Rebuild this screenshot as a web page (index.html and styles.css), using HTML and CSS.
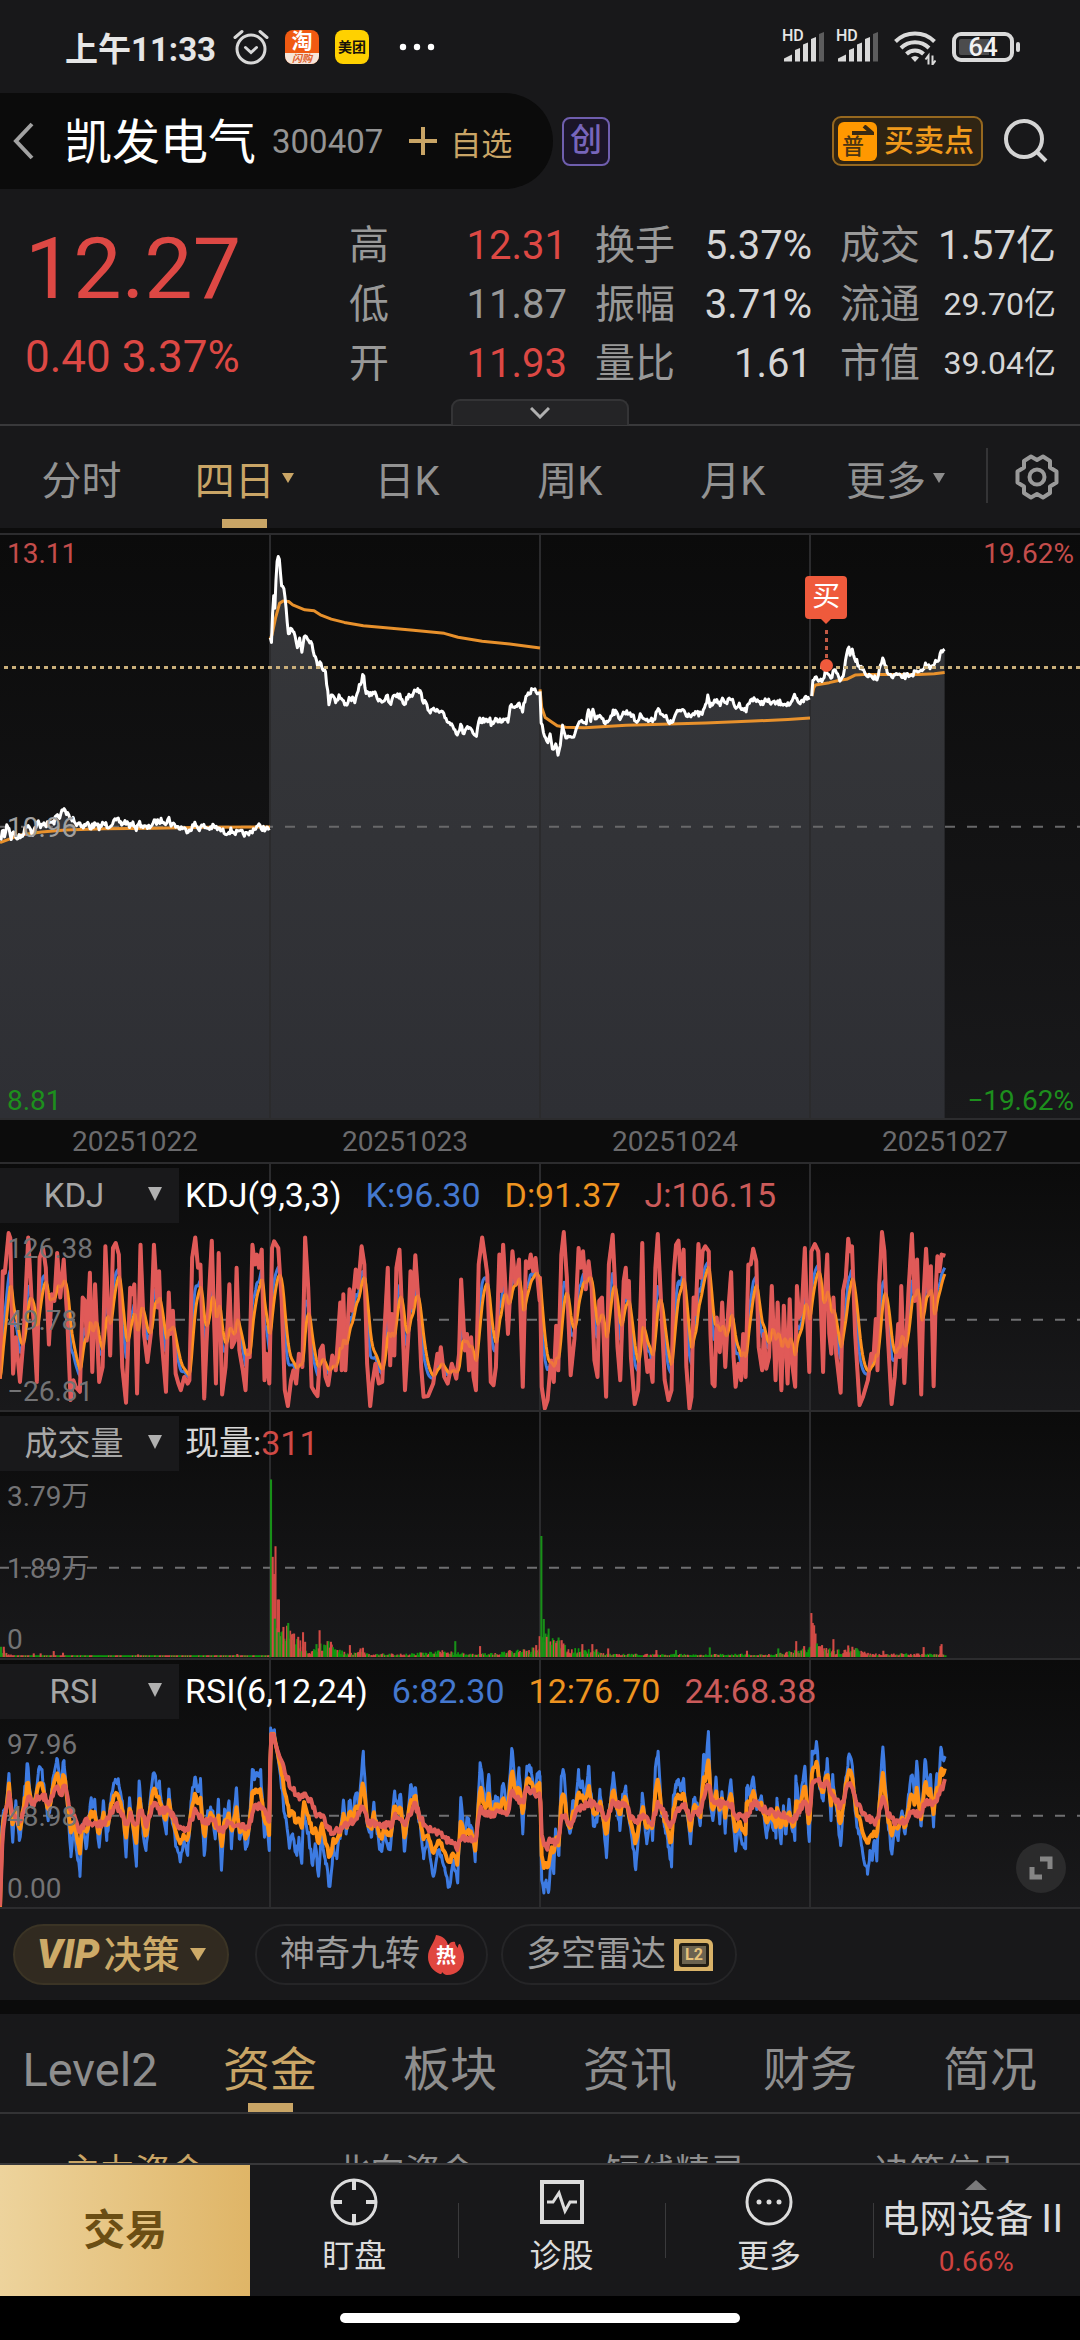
FILE: index.html
```
<!DOCTYPE html>
<html lang="zh-CN">
<head>
<meta charset="utf-8">
<meta name="viewport" content="width=device-width, initial-scale=1">
<title>凯发电气 300407</title>
<link rel="stylesheet" href="styles.css">
</head>
<body>
<div class="status">
  <span class="clock">上午11:33</span>
  <svg class="alarm" viewBox="0 0 36 36" width="36" height="36" fill="none" stroke="#d8d8d8" stroke-width="3" stroke-linecap="round"><circle cx="18" cy="20" r="14"/><path d="M12.500 18.500l5.500 5 5.500-5M2 8.500 9 2.500M34 8.500 27 2.500"/></svg>
  <span class="app app-tao"><b>淘</b><i>闪购</i></span>
  <span class="app app-mei">美团</span>
  <svg class="dots" viewBox="0 0 36 8" width="36" height="8" fill="#fff"><circle cx="4" cy="4" r="3.200"/><circle cx="18" cy="4" r="3.200"/><circle cx="32" cy="4" r="3.200"/></svg>
  <span class="status-right">
    <span class="signal"><em>HD</em><svg viewBox="0 0 41 31" width="41" height="31" fill="#dadada"><path d="M1 30.500v-3l8-4v7zM12 19l5-2v13.500h-5zM20 13.500l5-2v19h-5zM28 8l5-2v24.500h-5z"/><path fill="#5c5c5d" d="M36 3l5-2v29.500h-5z"/></svg></span>
    <span class="signal"><em>HD</em><svg viewBox="0 0 41 31" width="41" height="31" fill="#dadada"><path d="M1 30.500v-3l8-4v7zM12 19l5-2v13.500h-5zM20 13.500l5-2v19h-5zM28 8l5-2v24.500h-5z"/><path fill="#5c5c5d" d="M36 3l5-2v29.500h-5z"/></svg></span>
    <svg class="wifi" viewBox="0 0 42 34" width="42" height="34" fill="none" stroke="#dadada" stroke-width="4"><path d="M1.500 10.500a28 28 0 0 1 39 0M7 17a20 20 0 0 1 28 0M12.500 23a12 12 0 0 1 17 0"/><path d="M21 31l-4-4.500a6 6 0 0 1 8 0z" fill="#dadada" stroke="none"/><path d="M34.500 33.500v-9l-3 4M38.500 24.500v9l3-4" stroke-width="2"/></svg>
    <span class="battery"><span>64</span></span>
  </span>
</div>

<header class="head">
  <div class="pill">
    <button class="plain" aria-label="返回"><svg viewBox="0 0 24 38" width="24" height="38" fill="none" stroke="#a2a2a2" stroke-width="4"><path d="M20 2 4 19l16 17"/></svg></button>
    <h1>凯发电气</h1>
    <span class="code">300407</span>
    <button class="plain add"><svg viewBox="0 0 28 28" width="28" height="28" stroke="#c9a566" stroke-width="4"><path d="M14 0v28M0 14h28"/></svg>自选</button>
  </div>
  <span class="board">创</span>
  <button class="points"><span class="pu">普<svg viewBox="0 0 22 10" width="22" height="10" fill="none" stroke="#3a2a12" stroke-width="4"><path d="M0 8h20L12 1"/></svg></span>买卖点</button>
  <button class="plain search" aria-label="搜索"><svg viewBox="0 0 46 46" width="46" height="46" fill="none" stroke="#d4d4d4" stroke-width="4"><circle cx="21" cy="21" r="18"/><path d="M33.500 33.500 43 43"/></svg></button>
</header>

<section class="quote">
  <div class="price"><strong>12.27</strong><span>0.40 3.37%</span></div>
  <dl class="stats">
    <div><dt>高</dt><dd class="up">12.31</dd></div>
    <div><dt>换手</dt><dd>5.37%</dd></div>
    <div><dt>成交</dt><dd>1.57亿</dd></div>
    <div><dt>低</dt><dd class="dim">11.87</dd></div>
    <div><dt>振幅</dt><dd>3.71%</dd></div>
    <div><dt>流通</dt><dd class="small">29.70亿</dd></div>
    <div><dt>开</dt><dd class="up">11.93</dd></div>
    <div><dt>量比</dt><dd>1.61</dd></div>
    <div><dt>市值</dt><dd class="small">39.04亿</dd></div>
  </dl>
</section>
<div class="fold"><button aria-label="展开"><svg viewBox="0 0 20 12" width="20" height="12" fill="none" stroke="#b0b0b0" stroke-width="3"><path d="M1 1l9 9 9-9"/></svg></button></div>

<nav class="periods">
  <button>分时</button>
  <button class="on">四日<svg viewBox="0 0 12 10" width="12" height="10" fill="#c9a566"><path d="M0 0h12L6 10z"/></svg></button>
  <button>日K</button>
  <button>周K</button>
  <button>月K</button>
  <button>更多<svg viewBox="0 0 12 10" width="12" height="10" fill="#8d8d8d"><path d="M0 0h12L6 10z"/></svg></button>
  <button class="gear" aria-label="设置"><svg viewBox="0 0 48 48" width="48" height="48" fill="none" stroke="#9a9a9a" stroke-width="4" stroke-linejoin="round"><path d="M18 3.500 24 7l6-3.500 7 4.500v6.500l6.500 4v11l-6.500 4V40l-7 4.500-6-3.500-6 3.500-7-4.500v-6.500l-6.500-4v-11l6.500-4V8z"/><circle cx="24" cy="24" r="7.500"/></svg></button>
</nav>

<main>
  <section class="plot main-plot">
    <svg id="price" class="canvas" viewBox="0 39 3136 1761" preserveAspectRatio="none"></svg>
    <div class="axis"><span class="up">13.11</span><span>10.96</span><span class="down">8.81</span></div>
    <div class="axis axis-right"><span class="up">19.62%</span><span class="down">−19.62%</span></div>
    <div class="mark"><span class="flag">买</span><span class="stem"></span><span class="dot"></span></div>
  </section>
  <div class="dates"><span>20251022</span><span>20251023</span><span>20251024</span><span>20251027</span></div>

  <section class="plot sub">
    <svg id="kdj" class="canvas" viewBox="0 -114 3136 744" preserveAspectRatio="none"></svg>
    <div class="legend"><label class="pick"><select aria-label="指标一"><option>KDJ</option></select></label><span class="white">KDJ(9,3,3)</span><span class="blue">K:96.30</span><span class="orange">D:91.37</span><span class="rose">J:106.15</span></div>
    <div class="axis"><span>126.38</span><span>49.78</span><span>−26.81</span></div>
  </section>
  <section class="plot sub">
    <svg id="vol" class="canvas" viewBox="0 630 3136 744" preserveAspectRatio="none"></svg>
    <div class="legend"><label class="pick"><select aria-label="指标二"><option>成交量</option></select></label><span>现量:<b>311</b></span></div>
    <div class="axis"><span>3.79万</span><span>1.89万</span><span>0</span></div>
  </section>
  <section class="plot sub">
    <svg id="rsi" class="canvas" viewBox="0 -6 3136 747" preserveAspectRatio="none"></svg>
    <div class="legend"><label class="pick"><select aria-label="指标三"><option>RSI</option></select></label><span class="white">RSI(6,12,24)</span><span class="blue">6:82.30</span><span class="orange">12:76.70</span><span class="rose">24:68.38</span></div>
    <div class="axis"><span>97.96</span><span>48.98</span><span>0.00</span></div>
    <button class="expand" aria-label="全屏"><svg viewBox="0 0 24 24" width="24" height="24" fill="none" stroke="#858585" stroke-width="5"><path d="M11 3h10v10M13 21H3V11"/></svg></button>
  </section>
</main>

<div class="chips">
  <button class="chip vip"><i>VIP</i>决策<svg viewBox="0 0 16 13" width="16" height="13" fill="#cdaa68"><path d="M0 0h16L8 13z"/></svg></button>
  <button class="chip">神奇九转<span class="hot"><svg viewBox="0 0 36 40" width="36" height="40" fill="#e0463f"><path d="M8 0c7 1 11 5 12 10 2-3 5-4 7-3 0 2 1 4 3 6 0-2 0-4 2-4 2 4 4 8 4 13 0 11-7 18-17 18-2 0-4-2-5-3 0 2-1 2-2 2C5 36 0 30 0 22 0 13 6 9 8 0z"/></svg><b>热</b></span></button>
  <button class="chip">多空雷达<span class="l2"><b>L2</b></span></button>
</div>

<nav class="tabs">
  <a href="#level2">Level2</a><a href="#fund" class="on">资金</a><a href="#plate">板块</a><a href="#news">资讯</a><a href="#finance">财务</a><a href="#brief">简况</a>
</nav>
<nav class="subtabs"><a href="#main" class="on">主力资金</a><a href="#north">北向资金</a><a href="#short">短线精灵</a><a href="#signal">决策信号</a></nav>

<footer class="bar">
  <button class="trade">交易</button>
  <button><svg viewBox="0 0 50 50" width="50" height="50" fill="none" stroke="#dcdcdc" stroke-width="3"><circle cx="25" cy="25" r="22"/><path d="M25 3v10M25 37v10M3 25h10M37 25h10" stroke-width="4"/></svg>盯盘</button>
  <button><svg viewBox="0 0 50 50" width="50" height="50" fill="none" stroke="#dcdcdc" stroke-width="4"><path d="M5 5h40v40H5z"/><path d="M10 25h6l6-9 6 18 5-9h7" stroke-width="3"/></svg>诊股</button>
  <button><svg viewBox="0 0 50 50" width="50" height="50" fill="none" stroke="#dcdcdc" stroke-width="3"><circle cx="25" cy="25" r="22"/><g fill="#dcdcdc" stroke="none"><circle cx="15" cy="25" r="2.500"/><circle cx="25" cy="25" r="2.500"/><circle cx="35" cy="25" r="2.500"/></g></svg>更多</button>
  <button class="sector"><svg viewBox="0 0 22 10" width="22" height="10" fill="#7a7a7b"><path d="M0 10h22L11 0z"/></svg><span>电网设备Ⅱ</span><em>0.66%</em></button>
</footer>
<div class="home"><span></span></div>
<script src="charts.js"></script>
</body>
</html>
```
FILE: styles.css
```
* { box-sizing: border-box; }
body {
  margin: 0;
  min-height: 100vh;
  background: #18181a;
  color: #d6d6d6;
  font-family: Roboto, "Noto Sans CJK SC", sans-serif;
  display: flex;
  flex-direction: column;
  overflow-x: hidden;
}
button, select { font: inherit; color: inherit; border: 0; background: none; padding: 0; margin: 0; }
a { color: inherit; text-decoration: none; }
svg { display: block; flex: none; }

/* status bar */
.status { height: 93px; padding: 0 66px 0 65px; display: flex; align-items: center; color: #e6e6e6; }
.clock { font-size: 33px; font-weight: 700; width: 168px; white-space: nowrap; }
.app { width: 34px; height: 34px; border-radius: 8px; margin-left: 16px; overflow: hidden; text-align: center; }
.app-tao { background: #f05a12; color: #fff; }
.app-tao b { display: block; font-size: 21px; line-height: 23px; }
.app-tao i { display: block; font-size: 10px; line-height: 11px; background: #f6e6da; color: #e0602c; font-weight: 700; }
.app-mei { background: #ffd100; color: #17120a; font-size: 14px; font-weight: 700; line-height: 34px; }
.dots { margin-left: 30px; }
.status-right { margin-left: auto; display: flex; align-items: center; gap: 13px; }
.signal { position: relative; }
.signal em { position: absolute; left: -1px; top: -3px; font-style: normal; font-weight: 500; font-size: 16px; line-height: 16px; }
.wifi { margin: 2px 3px 0; }
.battery { position: relative; width: 62px; height: 30px; border: 4px solid #dadada; border-radius: 9px; background: linear-gradient(90deg, #4c4c4d 62%, transparent 62%); background-clip: content-box; padding: 3px; display: grid; place-items: center; font-size: 26px; font-weight: 500; line-height: 16px; color: #f2f2f2; }
.battery::after { content: ""; position: absolute; right: -10px; top: 6px; width: 4px; height: 10px; border-radius: 2px; background: #dadada; }

/* title */
.head { height: 96px; display: flex; align-items: center; }
.pill { height: 96px; width: 553px; background: #0b0b0b; border-radius: 0 48px 48px 0; display: flex; align-items: center; padding-left: 12px; white-space: nowrap; }
.pill h1 { margin: 0 0 0 28px; padding-top: 4px; font-size: 48px; font-weight: 400; color: #fff; line-height: 64px; }
.code { margin-left: 16px; font-size: 33px; color: #949494; }
.add { display: flex; align-items: center; gap: 13px; margin-left: 26px; font-size: 31px; color: #c9a566; }
.board { margin-left: 9px; width: 48px; height: 49px; border: 2px solid #6f5eae; border-radius: 8px; background: #1b1528; color: #7765bb; font-size: 32px; line-height: 43px; text-align: center; font-weight: 500; }
.points { margin-left: auto; width: 151px; height: 50px; border: 2px solid #96681f; border-radius: 9px; background: #2f2413; color: #f09a1c; font-size: 30px; line-height: 40px; display: flex; align-items: center; gap: 7px; padding-left: 4px; white-space: nowrap; font-weight: 500; }
.pu { position: relative; width: 39px; height: 39px; border-radius: 6px; background: #ff9800; color: #4b3512; font-size: 22px; line-height: 22px; padding: 14px 0 0 4px; text-align: left; }
.pu svg { position: absolute; right: 3px; top: 3px; }
.search { margin: 0 31px 0 20px; }

/* quote */
.quote { height: 210px; padding: 27px 24px 0 25px; display: flex; justify-content: space-between; }
.price { display: flex; flex-direction: column; color: #dd4844; white-space: nowrap; }
.price strong { font-size: 86px; font-weight: 400; line-height: 106px; }
.price span { font-size: 44px; line-height: 70px; }
.stats { margin: 0; display: grid; grid-template-columns: 218px 217px 216px; column-gap: 28px; grid-auto-rows: 59px; }
.stats div { display: flex; justify-content: space-between; align-items: center; white-space: nowrap; font-size: 40px; line-height: 61px; }
.stats dt { color: #989898; }
.stats dd { margin: 0; }
.stats .small { font-size: 32px; }
.stats .up { color: #dd4844; }
.stats .dim { color: #989898; }
.fold { height: 27px; display: flex; justify-content: center; border-bottom: 2px solid #39393b; }
.fold button { width: 178px; height: 26px; border: 2px solid #343436; border-bottom: 0; border-radius: 9px 9px 0 0; background: #242426; display: grid; place-items: center; }

/* period tabs */
.periods { height: 102px; display: flex; color: #929292; font-size: 40px; }
.periods button { flex: 1 1 0; display: flex; align-items: center; justify-content: center; gap: 7px; padding-top: 2px; position: relative; }
.periods .on { color: #c9a566; }
.periods .on::after, .tabs .on::after { content: ""; position: absolute; left: 50%; bottom: 0; width: 45px; height: 9px; margin-left: -22px; background: #c9a566; }
.periods .gear { flex: 0 0 103px; padding: 0 0 0 17px; }
.gear::before { content: ""; position: absolute; left: 9px; top: 22px; width: 2px; height: 55px; background: #343436; }

/* charts */
main { background: #0c0c0c; padding-top: 5px; }
.plot { position: relative; border-top: 2px solid #2c2c2e; background: linear-gradient(#0b0b0b, #19191b); }
.canvas { position: absolute; inset: 0; width: 100%; height: 100%; }
.main-plot { height: 587px; border-bottom: 2px solid #2c2c2e; }
.axis { position: absolute; inset: 0 auto 0 7px; display: flex; flex-direction: column; justify-content: space-between; font-size: 28px; line-height: 34px; color: #737375; }
.axis-right { inset: 0 6px 0 auto; text-align: right; }
.main-plot .axis { padding: 2px 0 0; color: #a0a0a0; }
.axis .up { color: #c44d4b; }
.axis .down { color: #1d8f1d; }
.sub { height: 248px; }
.sub:last-child { height: 249px; }
.sub .axis { top: 68px; bottom: 1px; }
.dates { height: 42px; display: grid; grid-template-columns: repeat(4, 1fr); text-align: center; font-size: 28px; line-height: 44px; color: #6b6b6d; }
.legend { position: relative; padding-top: 4px; display: flex; align-items: center; gap: 24px; font-size: 34px; line-height: 55px; white-space: nowrap; }
.pick { position: relative; width: 179px; height: 55px; margin-right: -18px; background: #19191b; color: #a6a6a6; font-size: 33px; }
.pick select { appearance: none; display: block; width: 100%; height: 55px; padding-right: 31px; text-align: center; text-align-last: center; }
.pick::after { content: ""; position: absolute; left: 148px; top: 19px; border: 7px solid transparent; border-top: 14px solid #b0b0b0; border-bottom: 0; }
.legend b { font-weight: 400; color: #cf4a46; }
.white { color: #fff; }
.blue { color: #4478cf; }
.orange { color: #ee9420; }
.rose { color: #cb5b5a; }
.expand { position: absolute; right: 14px; bottom: 14px; width: 50px; height: 50px; border-radius: 50%; background: #2b2b2c; display: grid; place-items: center; }
.mark { position: absolute; left: 76.5%; top: 41px; width: 42px; margin-left: -21px; display: flex; flex-direction: column; align-items: center; }
.flag { position: relative; width: 42px; height: 43px; border-radius: 4px; background: #ef5a3c; color: #fff; font-size: 28px; line-height: 42px; text-align: center; }
.flag::after { content: ""; position: absolute; left: 15px; top: 42px; border: 6px solid transparent; border-top-color: #ef5a3c; border-bottom: 0; }
.stem { width: 3px; height: 31px; margin-top: 11px; background: repeating-linear-gradient(#c25a45 0 4px, transparent 4px 8px); }
.dot { width: 13px; height: 13px; margin-top: -2px; border-radius: 50%; background: #ef5a3c; }

/* chips */
.chips { height: 93px; border-top: 2px solid #2c2c2e; padding: 15px 13px; display: flex; align-items: flex-start; }
.chip { height: 61px; border: 2px solid #252527; border-radius: 31px; padding: 0 22px 0 23px; display: flex; align-items: center; gap: 8px; margin-right: 13px; font-size: 35px; line-height: 50px; color: #9c9c9c; white-space: nowrap; }
.chip.vip { width: 216px; margin-right: 26px; border-color: #3b3425; background: #312a20; color: #cdaa68; font-size: 38px; font-weight: 500; padding: 0 0 0 22px; gap: 4px; }
.vip i { font-size: 40px; font-weight: 900; }
.vip svg { margin-left: 6px; }
.hot { position: relative; }
.hot b { position: absolute; left: 8px; top: 10px; font-size: 20px; line-height: 22px; color: #fff; }
.l2 { width: 39px; height: 32px; background: #d9b268; border-radius: 0 6px 0 0; padding: 4px 4px 4px 5px; }
.l2 b { display: block; height: 24px; border: 3px solid #221d14; border-radius: 3px; background: #6c6350; color: #e6c27a; font-size: 16px; line-height: 18px; text-align: center; }

/* lower tabs */
.tabs { height: 114px; border-top: 14px solid #0b0b0b; border-bottom: 2px solid #333335; display: grid; grid-template-columns: repeat(6, 1fr); text-align: center; font-size: 47px; line-height: 84px; color: #8e8e8e; }
.tabs a { position: relative; padding-top: 14px; }
.tabs .on { color: #c9a566; }
.subtabs { height: 49px; overflow: hidden; display: grid; grid-template-columns: repeat(4, 1fr); text-align: center; font-size: 35px; line-height: 50px; padding-top: 34px; color: #8e8e8e; }
.subtabs .on { color: #c9a566; }

/* bottom bar */
.bar { height: 133px; border-top: 2px solid #38383a; background: #18181a; display: flex; }
.bar button { position: relative; flex: 207 1 0; display: flex; flex-direction: column; align-items: center; padding-top: 12px; font-size: 32px; line-height: 46px; color: #dcdcdc; gap: 6px; white-space: nowrap; }
.bar button + button + button::before { content: ""; position: absolute; left: 0; top: 38px; width: 1px; height: 55px; background: #3a3a3c; }
.bar .trade { flex: 250 1 0; background: linear-gradient(90deg, #edd39c, #dfb567); color: #6b4e14; font-size: 42px; font-weight: 700; justify-content: center; padding: 0; }
.bar .sector { gap: 0; padding-top: 15px; }
.sector span { font-size: 38px; line-height: 48px; margin-top: 5px; }
.sector em { font-style: normal; font-size: 28px; line-height: 38px; color: #cf4340; }
.home { height: 44px; background: #000; display: flex; justify-content: center; align-items: flex-start; padding-top: 17px; }
.home span { width: 37%; height: 10px; border-radius: 5px; background: #fff; }
```
FILE: charts.js
```
// Each plot uses 784 units per trading day; series are "x,y" lists.
const NS = "http://www.w3.org/2000/svg";
const HALF = 1568;
const STEP = 3.27;

const pts = (s, dx = 0) => s.trim().split(/\s+/).map(p => p.split(",").map(Number)).map(([x, y]) => [x + dx, y]);
const join = (left, right) => pts(left).concat(pts(right, HALF));

let seed = 7;
const rnd = () => (seed = (seed * 16807) % 2147483647) / 2147483647;

function add(svg, tag, attrs) {
  const el = document.createElementNS(NS, tag);
  for (const k in attrs) el.setAttribute(k, attrs[k]);
  svg.appendChild(el);
  return el;
}
function line(svg, data, color, width) {
  add(svg, "polyline", { points: data.map(p => p.join(",")).join(" "), fill: "none", stroke: color, "stroke-width": width, "stroke-linejoin": "round", "vector-effect": "non-scaling-stroke" });
}
function rule(svg, x1, y1, x2, y2, color, width, dash, offset) {
  add(svg, "line", { x1, y1, x2, y2, stroke: color, "stroke-width": width, "stroke-dasharray": dash || "none", "stroke-dashoffset": offset || 0, "vector-effect": "non-scaling-stroke" });
}
function sample(data, noise = 0) {
  const out = [];
  let i = 0;
  const end = data[data.length - 1][0];
  for (let x = data[0][0]; x <= end; x += STEP) {
    while (i < data.length - 2 && data[i + 1][0] < x) i++;
    const [x0, y0] = data[i], [x1, y1] = data[i + 1];
    const t = x1 === x0 ? 1 : Math.min(1, (x - x0) / (x1 - x0));
    out.push([x, y0 + (y1 - y0) * t + (rnd() - 0.5) * noise]);
  }
  return out;
}
// keep the turning points of a series beside its samples
const merge = (a, b) => a.concat(b).sort((p, q) => p[0] - q[0]);
const days = (svg, top, bottom) => [784, 1568, 2352].forEach(x => rule(svg, x, top, x, bottom, "#2b2b2d", 2));
const middle = (svg, y) => rule(svg, 0, y, 3136, y, "#6f6f71", 2, "10 12", 1);

// price
const priceDays = [
  pts("0,965 8,930 14,950 20,915 26,920 32,960 38,925 45,955 60,950 70,935 80,910 88,925 95,940 110,905 118,925 125,905 135,915 145,905 155,910 165,885 172,890 180,875 188,868 193,885 198,878 205,900 213,892 222,915 232,905 240,922 255,910 262,922 275,915 290,922 300,910 315,918 330,905 345,902 352,912 365,905 378,918 390,912 398,930 402,905 415,920 430,925 445,908 460,905 475,900 482,908 490,895 497,912 510,915 520,925 530,922 540,932 555,925 565,912 578,925 590,918 605,925 620,920 640,930 655,938 670,932 690,940 700,938 720,945 735,928 750,918 765,925 784,930"),
  pts("785,355 788,378 794,210 799,270 803,110 811,112 818,205 824,200 834,295 838,340 846,315 855,330 864,385 870,350 877,395 882,345 888,340 905,365 915,405 922,440 930,415 937,440 945,455 955,545 963,515 975,540 985,525 995,540 1003,555 1015,530 1033,540 1043,500 1055,460 1063,515 1075,525 1084,510 1095,530 1110,540 1125,530 1133,555 1145,520 1160,525 1175,550 1187,520 1195,525 1205,500 1220,515 1232,545 1250,570 1265,570 1285,580 1300,600 1320,620 1328,640 1338,615 1346,640 1356,618 1368,632 1382,652 1392,600 1405,600 1420,595 1428,610 1440,600 1460,598 1475,598 1482,550 1495,555 1505,545 1517,570 1528,520 1545,510 1568,515"),
  pts("0,505 3,600 12,645 22,665 30,640 36,690 45,670 53,705 60,660 65,615 75,650 90,655 100,640 112,610 125,605 133,615 140,565 148,600 153,565 160,600 175,580 192,610 213,570 232,590 245,575 262,575 280,605 295,580 310,600 325,600 335,585 343,555 352,585 365,590 382,610 395,580 405,570 415,565 425,580 440,580 470,580 480,560 488,522 495,560 508,530 518,555 530,535 545,545 555,530 565,560 580,552 597,570 610,540 620,530 635,548 655,540 680,548 700,545 730,552 740,525 750,550 765,540 770,520 784,545", HALF),
  pts("789,525 792,480 803,465 812,480 822,470 832,445 845,470 855,445 865,455 873,488 882,455 888,420 893,375 900,395 906,380 915,410 925,435 935,445 950,470 965,465 978,478 988,440 996,415 1005,440 1020,470 1035,460 1045,468 1065,465 1090,455 1110,455 1117,430 1130,438 1145,425 1160,420 1163,392 1176,380", HALF)
].map(d => sample(d, 17));
const averages = [
  pts("0,968 60,945 120,936 190,930 300,926 450,925 600,922 784,921"),
  pts("784,355 790,340 800,290 812,245 822,238 838,240 850,250 885,265 912,268 930,280 962,293 1000,303 1055,313 1120,319 1200,327 1290,336 1330,348 1400,360 1480,368 1568,380"),
  pts("0,505 5,560 15,590 50,615 75,620 130,621 250,614 480,607 620,601 720,596 784,592", HALF),
  pts("790,525 795,500 800,492 840,485 870,478 890,475 915,462 950,460 1100,460 1145,458 1175,454", HALF)
];
{
  const svg = document.getElementById("price");
  svg.innerHTML = '<defs><linearGradient id="fade" x1="0" y1="0" x2="0" y2="1"><stop offset="0" stop-color="#36373a"/><stop offset="1" stop-color="#2e2f34"/></linearGradient></defs>';
  const all = priceDays.flat();
  add(svg, "polygon", { points: "0,1800 " + all.map(p => p.join(",")).join(" ") + " " + all[all.length - 1][0] + ",1800", fill: "url(#fade)" });
  days(svg, 39, 1800);
  rule(svg, 0, 920, 3136, 920, "#68686a", 2, "10 12", 1);
  averages.forEach(a => line(svg, a, "#e8912c", 3));
  priceDays.forEach(d => line(svg, d, "#ffffff", 3));
  rule(svg, 0, 439, 3136, 439, "#c9ae7a", 3, "4 4", 4);
}

// KDJ: D smooths J, K lies between them
{
  const svg = document.getElementById("kdj");
  const turns = join(
    "0,535 8,210 14,215 25,95 30,110 38,520 46,410 58,545 68,420 82,108 92,300 97,350 107,545 115,170 125,140 133,200 142,432 150,280 158,300 166,155 175,290 185,175 195,350 205,600 213,540 220,560 232,575 240,290 247,300 252,420 261,215 268,515 276,250 288,545 298,500 306,135 320,465 328,140 336,125 345,160 355,500 366,608 378,260 385,280 390,250 398,580 408,130 418,400 428,485 438,400 447,130 458,320 462,210 468,400 482,575 490,275 495,400 502,330 510,520 518,550 525,570 535,530 545,550 550,540 558,170 567,108 575,200 582,190 593,595 600,420 615,118 627,550 635,155 645,583 655,500 666,250 673,440 682,420 687,200 695,450 705,510 713,570 718,450 725,470 733,130 740,190 746,160 752,200 760,145 768,540 773,460 782,550 790,140 796,120 808,140 818,300 827,570 836,618 845,540 852,510 860,550 868,460 878,500 886,108 895,260 905,560 913,575 922,588 930,450 937,435 945,530 953,555 965,465 975,510 988,305 992,510 997,280 1003,510 1015,265 1022,330 1033,205 1040,260 1050,135 1058,190 1066,490 1075,618 1082,545 1090,490 1100,550 1110,545 1117,380 1126,200 1133,495 1138,340 1145,465 1151,200 1160,145 1168,350 1176,570 1186,400 1192,210 1198,320 1206,162 1215,300 1223,500 1230,590 1243,588 1258,550 1270,460 1275,490 1280,440 1290,530 1300,550 1312,490 1325,535 1333,460 1339,235 1350,450 1356,400 1362,510 1368,410 1375,530 1382,570 1390,190 1400,108 1410,180 1415,220 1425,545 1433,555 1440,500 1450,160 1455,270 1461,130 1475,400 1488,150 1497,250 1507,175 1518,560 1527,180 1535,200 1541,160 1548,210 1555,170 1567,300",
    "0,230 5,560 14,625 22,600 32,480 40,545 47,375 53,510 62,160 69,92 78,230 89,525 100,415 112,140 118,200 125,150 133,265 141,180 150,260 158,480 167,530 172,300 180,290 192,590 200,190 211,100 218,250 225,440 233,540 243,240 249,200 253,290 258,240 264,470 275,612 285,570 297,125 303,420 312,515 318,480 327,545 335,200 342,98 350,270 362,540 373,600 382,570 388,220 395,130 402,118 408,220 417,145 425,500 434,625 440,590 446,290 452,340 460,128 467,230 472,150 480,135 490,150 495,400 501,550 507,558 513,350 522,455 529,305 538,500 546,340 555,213 562,470 568,560 576,490 584,540 590,400 597,530 605,190 612,190 619,142 628,180 635,440 645,510 650,400 657,505 665,470 673,255 684,540 690,305 701,570 708,315 719,550 725,295 732,490 741,560 746,255 752,350 760,330 769,140 775,330 782,515 788,150 798,128 808,150 815,300 822,515 828,270 834,160 840,400 846,460 852,290 860,460 873,578 880,270 888,230 895,112 900,150 906,135 915,400 928,615 938,590 952,540 962,460 968,480 975,355 980,510 985,250 993,92 1000,150 1007,350 1021,612 1030,530 1040,370 1044,470 1049,255 1058,548 1070,270 1080,98 1088,300 1095,175 1107,583 1113,300 1121,142 1128,280 1135,195 1143,558 1150,250 1154,165 1160,210 1166,160 1177,163");
  const j = sample(turns);
  let d = j[0][1];
  const dLine = j.map(([x, y]) => [x, d = d * 6 / 7 + y / 7]);
  const kLine = j.map(([x, y], i) => [x, (y + 2 * dLine[i][1]) / 3]);
  days(svg, -114, 630);
  middle(svg, 357);
  line(svg, kLine, "#4079dc", 3);
  line(svg, turns, "#e05a59", 4);
  line(svg, dLine, "#ff9120", 3);
  line(svg, turns, "#e05a5988", 3);
}

// volume
{
  const svg = document.getElementById("vol");
  days(svg, 630, 1374);
  middle(svg, 1101);
  const env = join("0,25 20,8 60,4 770,4 784,15 800,100 840,70 880,35 905,15 920,38 950,40 1000,12 1050,18 1070,8 1200,10 1300,18 1360,8 1450,12 1500,18 1567,26", "5,60 50,45 90,22 160,20 190,8 400,8 470,6 500,8 680,8 720,14 784,24 815,28 850,18 915,26 950,10 1177,8");
  for (const [x, y] of sample(env)) {
    const h = Math.max(5, y * (0.4 + rnd() * 0.85));
    const red = rnd() < (x > 2360 ? 0.55 : 0.42);
    add(svg, "rect", { x, y: 1371 - h, width: 5, height: h, fill: red ? "#d24a45" : "#0e9a0e" });
  }
  const red = "#d24a45", green = "#189018";
  const spikes = [
    [0, 1340, green], [8, 1340, red], [95, 1360, red], [115, 1360, red], [153, 1353, red], [180, 1358, red], [398, 1363, red], [686, 1362, red],
    [784, 834, green], [789, 1068, red], [793, 1120, red], [797, 1036, red], [803, 1197, red], [807, 1197, red], [795, 1255, green], [806, 1296, green], [820, 1280, red], [834, 1268, green], [843, 1303, red], [851, 1300, red], [863, 1310, red], [877, 1296, red], [883, 1325, red], [916, 1332, green], [925, 1290, red], [943, 1335, green], [958, 1325, red], [1013, 1335, red], [1044, 1345, red], [1051, 1343, red], [1319, 1323, green], [1391, 1338, red], [1477, 1350, red], [1519, 1348, red], [1554, 1335, red], [1564, 1308, red],
    [1569, 1005, green], [1576, 1256, green], [1581, 1300, green], [1585, 1310, red], [1590, 1285, green], [1619, 1312, green], [1628, 1320, red], [1633, 1330, red], [1688, 1332, red], [1717, 1332, red], [1763, 1345, red], [1903, 1350, red], [1960, 1350, green], [2058, 1342, green], [2166, 1352, red], [2257, 1345, green], [2309, 1323, red], [2332, 1338, red], [2351, 1340, green],
    [2353, 1238, red], [2357, 1268, red], [2361, 1275, red], [2365, 1300, red], [2369, 1330, green], [2384, 1335, red], [2417, 1317, red], [2460, 1336, red], [2472, 1340, red], [2484, 1345, green], [2562, 1352, red], [2679, 1341, red], [2728, 1338, red], [2731, 1332, red]
  ];
  for (const [x, y, fill] of spikes) add(svg, "rect", { x, y, width: 6, height: 1371 - y, fill });
}

// RSI
{
  const svg = document.getElementById("rsi");
  const turns = join(
    "0,735 5,500 10,450 18,440 26,337 37,545 46,420 56,540 65,460 80,308 90,430 100,420 112,325 122,325 130,400 140,480 150,385 165,292 175,380 186,298 195,420 206,578 214,510 222,570 232,638 240,490 250,565 262,430 275,415 288,560 300,420 310,540 320,430 335,355 345,370 355,420 366,590 376,415 386,500 396,618 404,360 415,500 424,570 435,430 447,335 458,380 463,360 472,450 483,520 490,390 500,480 512,560 524,600 535,540 545,585 555,420 567,348 575,390 582,365 593,585 603,450 618,450 625,535 634,415 643,630 652,445 660,480 665,420 672,565 686,382 695,535 705,500 713,558 722,520 732,340 745,345 757,325 768,530 775,480 782,570 786,200 797,205 806,280 818,380 828,470 840,560 850,520 862,585 868,530 876,608 882,450 895,520 908,615 915,550 925,648 934,520 945,600 957,675 968,560 978,595 990,500 997,420 1005,520 1015,425 1025,470 1033,400 1042,430 1055,270 1066,490 1078,530 1085,430 1095,520 1107,572 1117,510 1133,568 1146,390 1157,430 1163,400 1175,572 1192,372 1200,420 1205,380 1218,480 1230,595 1240,540 1258,648 1270,570 1280,590 1292,630 1305,680 1317,600 1329,668 1338,410 1348,530 1356,470 1368,500 1380,588 1394,305 1403,380 1410,440 1420,345 1427,450 1440,415 1452,440 1461,370 1473,450 1486,262 1497,400 1507,320 1518,520 1530,315 1542,320 1550,400 1560,350 1567,345",
    "0,345 5,660 12,685 18,665 26,688 33,570 40,640 45,505 55,585 62,345 70,340 78,480 88,515 95,420 102,470 112,325 118,380 123,360 130,420 141,315 155,495 165,470 174,385 182,470 193,592 203,430 213,335 222,430 232,510 240,400 249,375 258,470 268,540 278,628 288,510 297,397 310,550 318,480 327,540 335,320 343,270 352,450 362,490 372,560 382,620 387,410 395,380 402,355 408,390 417,352 425,450 437,550 446,415 455,430 465,495 475,280 481,330 489,210 496,440 503,470 511,348 522,490 528,395 538,508 546,420 555,368 562,500 568,572 577,500 585,540 597,565 600,380 610,410 619,348 630,440 643,405 650,460 658,532 670,465 685,520 688,412 700,550 707,435 713,520 723,415 730,490 740,540 743,345 752,450 769,315 775,440 782,543 790,270 804,252 812,380 822,412 834,292 845,480 850,340 862,450 873,555 880,440 895,290 907,315 915,450 925,520 935,560 951,642 958,570 965,600 971,540 978,602 986,400 996,262 1008,460 1021,575 1032,500 1040,540 1050,455 1060,520 1070,400 1081,342 1087,400 1094,300 1106,495 1118,295 1128,390 1134,340 1143,490 1152,340 1158,380 1164,258 1172,290 1177,285");
  const fast = sample(turns, 34);
  const slow = sample(join(
    "0,735 8,510 26,400 40,470 60,490 80,410 95,430 120,400 145,425 165,375 178,410 186,365 205,450 232,510 250,480 270,490 290,490 310,480 338,430 366,490 380,460 396,500 404,440 425,490 447,430 465,450 490,445 520,495 545,508 567,445 590,490 615,470 643,510 665,485 690,490 720,500 740,440 757,430 782,480 786,225 795,225 805,255 820,310 845,380 870,408 888,405 905,425 920,460 935,465 957,510 980,510 1000,495 1030,480 1055,430 1068,480 1100,495 1140,490 1150,460 1175,490 1205,430 1225,480 1250,508 1280,515 1310,550 1329,560 1345,530 1380,545 1394,440 1410,460 1430,465 1460,445 1475,460 1486,395 1500,410 1518,425 1530,385 1550,395 1567,400",
    "0,390 6,540 20,560 30,540 50,550 65,460 88,495 110,450 140,425 170,440 193,470 213,425 250,440 275,485 300,470 325,485 343,425 382,500 395,450 417,430 435,470 465,450 489,370 500,420 530,430 555,435 570,465 597,475 619,425 650,445 700,465 740,475 769,420 782,465 792,360 805,350 820,380 834,365 850,400 873,440 895,370 906,370 920,430 945,470 978,485 996,410 1010,460 1030,485 1060,480 1080,450 1106,465 1120,420 1143,435 1155,405 1177,360"), 22);
  const mid = slow.map(([x, y], i) => [x, y + (fast[i][1] - y) * 0.48]);
  days(svg, -6, 741);
  middle(svg, 465);
  line(svg, merge(fast, turns), "#3d7be2", 3);
  line(svg, mid, "#ff9014", 4);
  line(svg, slow, "#e05e58", 4);
}
```
